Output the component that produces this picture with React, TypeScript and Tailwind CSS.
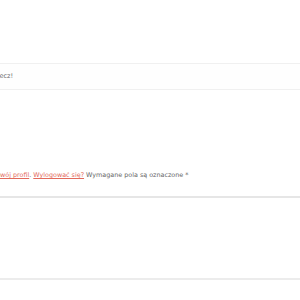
export default function App() {
  return (
    <div className="w-[300px] h-[300px] overflow-hidden bg-white font-['DejaVu_Sans',sans-serif]">
      <div className="pt-[63px]">
        <section className="h-[27px] border-y border-[#f0f0f0] bg-[#fefefe] flex items-center">
          <div className="w-[13px] flex justify-end whitespace-nowrap text-[6.5px] text-[#6a6a6a]">
            Masz pytanie? Napisz do nas w tej rzecz!
          </div>
        </section>

        <p className="mt-[80px] h-[10px] leading-[10px] flex whitespace-nowrap text-[6.4px] text-[#666]">
          <span className="w-0 flex justify-end">
            Zalogowano jako admin. Edytuj s
          </span>
          <a className="text-[#e36a5c] underline">wój profil</a>
          <span>.&nbsp;</span>
          <a className="text-[#e36a5c] underline">Wylogować się?</a>
          <span>&nbsp;Wymagane pola są oznaczone *</span>
        </p>

        <div className="mt-[16px] h-[2px] bg-[#e6e6e6]"></div>
        <div className="mt-[80px] h-[2px] bg-[#ececec]"></div>
      </div>
    </div>
  );
}
